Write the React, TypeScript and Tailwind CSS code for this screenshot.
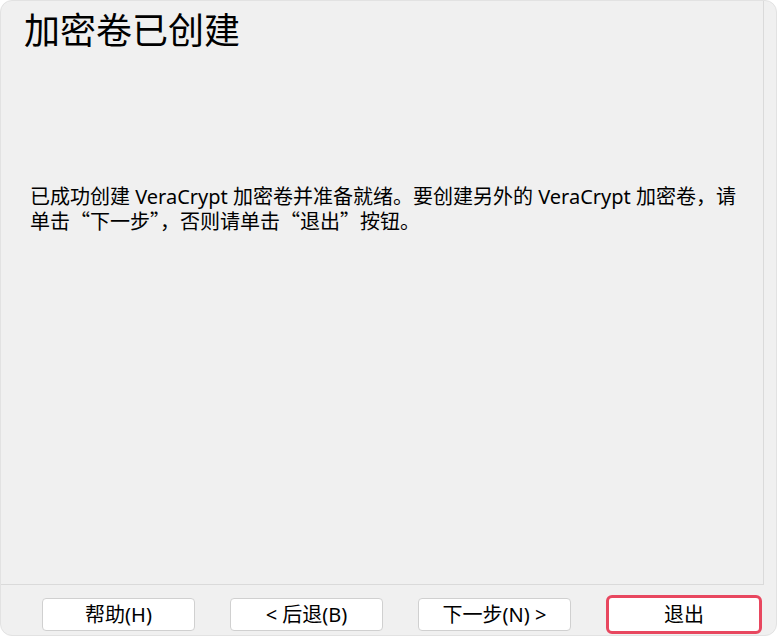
const buttons = [
  { label: "帮助(H)", primary: false },
  { label: "< 后退(B)", primary: false },
  { label: "下一步(N) >", primary: false },
  { label: "退出", primary: true },
]

export default function App() {
  return (
    <div className="h-[639px] w-[779px] overflow-hidden bg-white font-['Noto_Sans','Noto_Sans_CJK_SC',sans-serif]">
      <div className="flex h-[636px] w-[777px] flex-col overflow-hidden rounded-[12px] border border-[#e2e2e2] bg-[#f0f0f0] text-black">
        <div className="flex h-[584px] w-[763px] flex-col border-b border-r border-[#dadada]">
          <h1 className="pl-[23px] pt-[6px] text-[36px] font-normal leading-[48px]">加密卷已创建</h1>
          <div className="mt-[130px] flex flex-col pl-[29px] pr-[10px] text-[20px] leading-[24px]">
            <p>已成功创建 VeraCrypt 加密卷并准备就绪。要创建另外的 VeraCrypt 加密卷，请</p>
            <p className="font-['Noto_Sans_CJK_SC',sans-serif]">单击“下一步”，否则请单击“退出”按钮。</p>
          </div>
        </div>
        <div className="flex gap-[35px] pl-[41px] pt-[13px]">
          {buttons.map((b) =>
            b.primary ? (
              <div
                key={b.label}
                className="-mt-[3px] flex h-[39px] w-[156px] items-center justify-center rounded-[6px] border-[3px] border-[#e8475f] bg-white text-[20px]"
              >
                {b.label}
              </div>
            ) : (
              <div
                key={b.label}
                className="flex h-[33px] w-[153px] items-center justify-center rounded-[4px] border border-[#d0d0d0] bg-white text-[20px]"
              >
                {b.label}
              </div>
            )
          )}
        </div>
      </div>
    </div>
  )
}
